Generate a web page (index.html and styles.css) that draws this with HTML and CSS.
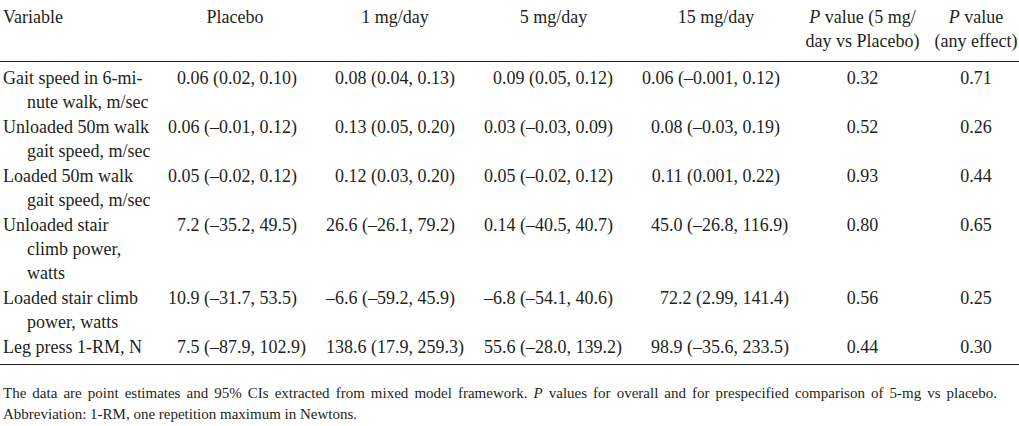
FILE: index.html
```html
<!DOCTYPE html>
<html lang="en">
<head>
<meta charset="utf-8">
<title>Table</title>
<link rel="stylesheet" href="styles.css">
</head>
<body>
<table class="results">
  <colgroup>
    <col class="c-var"><col class="c-pl"><col class="c-1"><col class="c-5"><col class="c-15"><col class="c-p1"><col class="c-p2">
  </colgroup>
  <thead>
    <tr>
      <th class="var">Variable</th>
      <th>Placebo</th>
      <th>1 mg/day</th>
      <th>5 mg/day</th>
      <th>15 mg/day</th>
      <th class="p1"><i>P</i> value (5 mg/<br>day vs Placebo)</th>
      <th class="p2"><i>P</i> value<br>(any effect)</th>
    </tr>
  </thead>
  <tbody>
    <tr>
      <td class="var">Gait speed in 6-mi-<br>nute walk, m/sec</td>
      <td class="ci"><span class="l">0.06 (0.02,</span><span class="r"> 0.10)</span></td>
      <td class="ci"><span class="l">0.08 (0.04,</span><span class="r"> 0.13)</span></td>
      <td class="ci"><span class="l">0.09 (0.05,</span><span class="r"> 0.12)</span></td>
      <td class="ci"><span class="l">0.06 (–0.001,</span><span class="r"> 0.12)</span></td>
      <td class="p1">0.32</td>
      <td class="p2">0.71</td>
    </tr>
    <tr>
      <td class="var">Unloaded 50m walk<br>gait speed, m/sec</td>
      <td class="ci"><span class="l">0.06 (–0.01,</span><span class="r"> 0.12)</span></td>
      <td class="ci"><span class="l">0.13 (0.05,</span><span class="r"> 0.20)</span></td>
      <td class="ci"><span class="l">0.03 (–0.03,</span><span class="r"> 0.09)</span></td>
      <td class="ci"><span class="l">0.08 (–0.03,</span><span class="r"> 0.19)</span></td>
      <td class="p1">0.52</td>
      <td class="p2">0.26</td>
    </tr>
    <tr>
      <td class="var">Loaded 50m walk<br>gait speed, m/sec</td>
      <td class="ci"><span class="l">0.05 (–0.02,</span><span class="r"> 0.12)</span></td>
      <td class="ci"><span class="l">0.12 (0.03,</span><span class="r"> 0.20)</span></td>
      <td class="ci"><span class="l">0.05 (–0.02,</span><span class="r"> 0.12)</span></td>
      <td class="ci"><span class="l">0.11 (0.001,</span><span class="r"> 0.22)</span></td>
      <td class="p1">0.93</td>
      <td class="p2">0.44</td>
    </tr>
    <tr>
      <td class="var">Unloaded stair<br>climb power,<br>watts</td>
      <td class="ci"><span class="l">7.2 (–35.2,</span><span class="r"> 49.5)</span></td>
      <td class="ci"><span class="l">26.6 (–26.1,</span><span class="r"> 79.2)</span></td>
      <td class="ci"><span class="l">0.14 (–40.5,</span><span class="r"> 40.7)</span></td>
      <td class="ci"><span class="l">45.0 (–26.8,</span><span class="r"> 116.9)</span></td>
      <td class="p1">0.80</td>
      <td class="p2">0.65</td>
    </tr>
    <tr>
      <td class="var">Loaded stair climb<br>power, watts</td>
      <td class="ci"><span class="l">10.9 (–31.7,</span><span class="r"> 53.5)</span></td>
      <td class="ci"><span class="l">–6.6 (–59.2,</span><span class="r"> 45.9)</span></td>
      <td class="ci"><span class="l">–6.8 (–54.1,</span><span class="r"> 40.6)</span></td>
      <td class="ci"><span class="l">72.2 (2.99,</span><span class="r"> 141.4)</span></td>
      <td class="p1">0.56</td>
      <td class="p2">0.25</td>
    </tr>
    <tr>
      <td class="var">Leg press 1-RM, N</td>
      <td class="ci"><span class="l">7.5 (–87.9,</span><span class="r"> 102.9)</span></td>
      <td class="ci"><span class="l">138.6 (17.9,</span><span class="r"> 259.3)</span></td>
      <td class="ci"><span class="l">55.6 (–28.0,</span><span class="r"> 139.2)</span></td>
      <td class="ci"><span class="l">98.9 (–35.6,</span><span class="r"> 233.5)</span></td>
      <td class="p1">0.44</td>
      <td class="p2">0.30</td>
    </tr>
  </tbody>
</table>
<div class="note">
  <p class="note-line justified">The data are point estimates and 95% CIs extracted from mixed model framework. <i>P</i> values for overall and for prespecified comparison of 5-mg vs placebo.</p>
  <p class="note-line">Abbreviation: 1-RM, one repetition maximum in Newtons.</p>
</div>
</body>
</html>
```
FILE: styles.css
```css
html, body {
  margin: 0;
  padding: 0;
  background: #ffffff;
}

body {
  font-family: "Liberation Serif", "Times New Roman", serif;
  color: #231f20;
  width: 1019px;
}

.results {
  width: 1019px;
  table-layout: fixed;
  border-collapse: collapse;
  font-size: 18px;
  line-height: 24px;
}

.c-var { width: 155px; }
.c-pl { width: 160px; }
.c-1 { width: 160px; }
.c-5 { width: 157px; }
.c-15 { width: 168px; }
.c-p1 { width: 125px; }
.c-p2 { width: 94px; }

.results th {
  font-weight: normal;
  text-align: center;
  vertical-align: top;
  padding: 5px 0 8px;
  white-space: nowrap;
  border-bottom: 1px solid #231f20;
}

.results th.var {
  text-align: left;
  padding-left: 3px;
}

.results td {
  vertical-align: top;
  padding: 1px 0 0;
  white-space: nowrap;
}

.results tbody tr:first-child td {
  padding-top: 4px;
}

.results tbody tr:last-child td {
  padding-bottom: 5px;
  border-bottom: 1px solid #231f20;
}

.results td.var {
  padding-left: 27px;
  text-indent: -24px;
}

.results .p1,
.results .p2 {
  text-align: center;
}

.results .p2 {
  padding-left: 8px;
}

.ci .l {
  display: inline-block;
  text-align: right;
}

.ci .r {
  white-space: pre;
}

.ci:nth-child(2) .l { width: 100px; }
.ci:nth-child(3) .l { width: 98px; }
.ci:nth-child(4) .l { width: 96px; }
.ci:nth-child(5) .l { width: 106px; }

.note {
  width: 994px;
  margin: 18px 0 0;
  padding-left: 3px;
  font-size: 15px;
  line-height: 20.5px;
}

.note-line {
  margin: 0;
  white-space: nowrap;
}

.note-line.justified {
  white-space: normal;
  text-align: justify;
  text-align-last: justify;
}
```
